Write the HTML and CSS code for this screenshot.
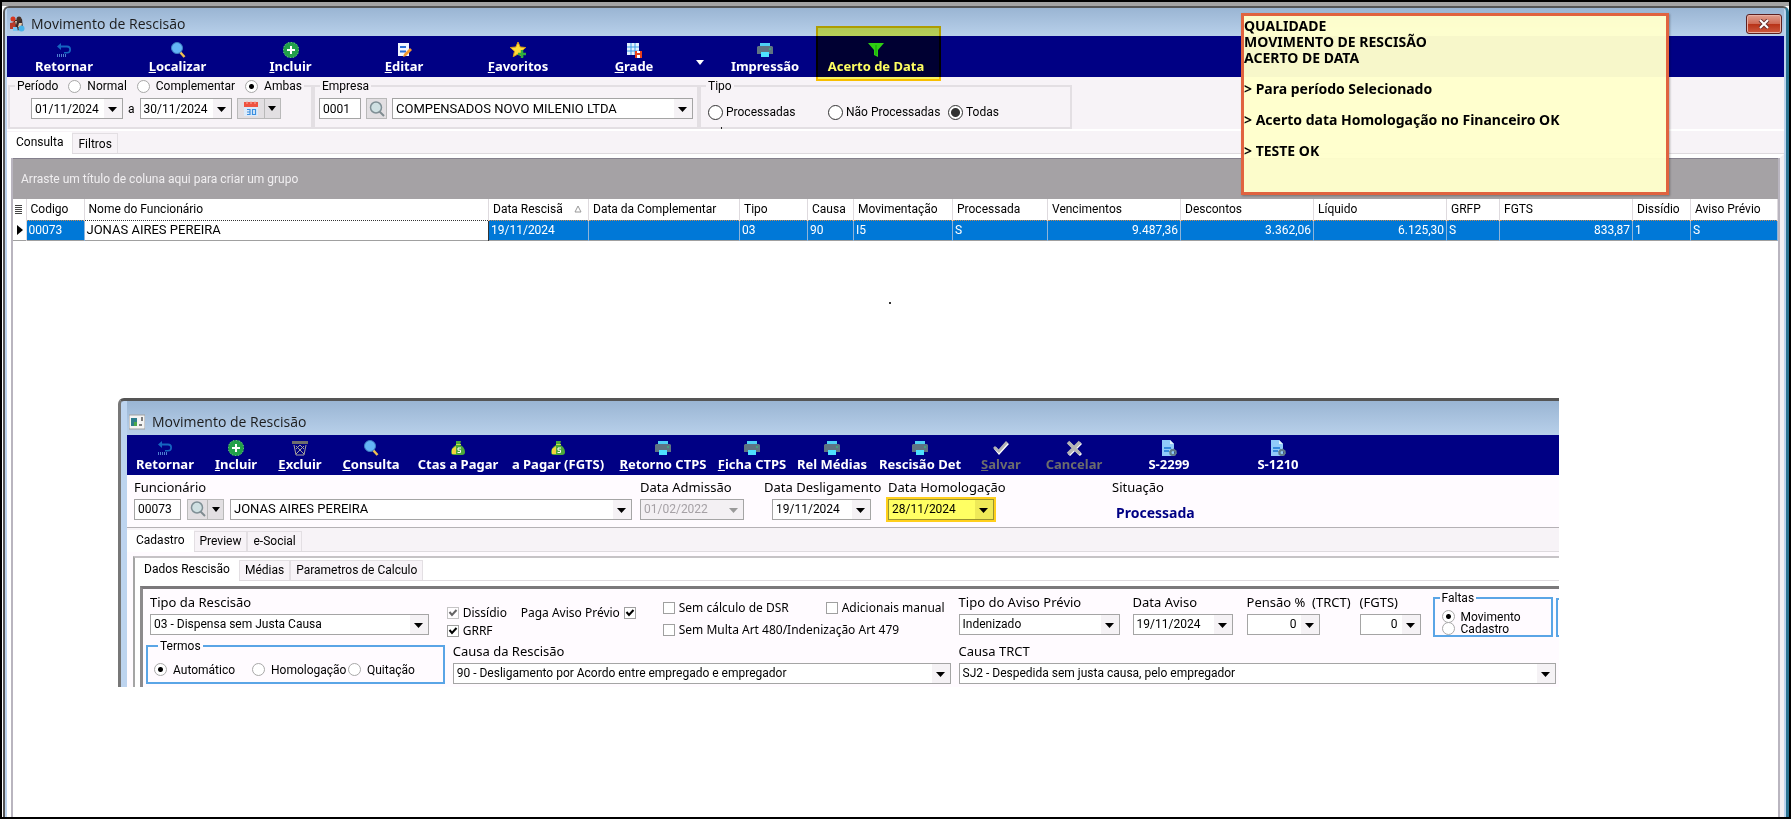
FILE: index.html
```html
<!DOCTYPE html>
<html lang="pt-br">
<head>
    <meta charset="UTF-8">
    <meta name="viewport" content="width=device-width, initial-scale=1.0">
    <title>Movimento de Rescisão</title>
    <link rel="stylesheet" href="styles.css">
</head>
<body>
    <!-- Icones -->
    <svg class="sprite" aria-hidden="true">
        <symbol id="i-retornar" viewBox="0 0 16 16">
            <path d="M1 4.500L5 1v2.500h6a4 4 0 0 1 0 8H8V10h3a2.300 2.300 0 0 0 0-4.600H5V8z" fill="#1565c0"/>
            <path d="M1 13.500h9" stroke="#4f7fd0" stroke-width="3" stroke-dasharray="1 1"/>
        </symbol>
        <symbol id="i-lupa" viewBox="0 0 16 16">
            <path d="M10 10l4.500 5" stroke="#f0c050" stroke-width="2.500"/>
            <circle cx="7" cy="6" r="5.500" fill="#64b5f6" stroke="#3e7fc4"/>
        </symbol>
        <symbol id="i-lupa-cinza" viewBox="0 0 16 16">
            <path d="M10 10l5 5" stroke="#808c90" stroke-width="2"/>
            <circle cx="7" cy="6.500" r="5.500" fill="#cfe0e2" stroke="#7f8f95" stroke-width="1.500"/>
        </symbol>
        <symbol id="i-incluir" viewBox="0 0 16 16">
            <circle cx="8" cy="8" r="8" fill="#22a04a"/>
            <circle cx="8" cy="8" r="7.700" fill="none" stroke="#bfe8c8" stroke-width=".600" stroke-dasharray="1 2"/>
            <path d="M8 4v8M4 8h8" stroke="#fff" stroke-width="2"/>
        </symbol>
        <symbol id="i-editar" viewBox="0 0 16 16">
            <path d="M2 1h11v13H2z" fill="#f2f6ff"/>
            <path d="M4 5h6M4 9.500h6" stroke="#2b6fd6" stroke-width="2"/>
            <path d="M14 6l2 2-6 6-3 1 1-3z" fill="#f59a2b"/>
        </symbol>
        <symbol id="i-favoritos" viewBox="0 0 16 16">
            <path d="M8 0l2.200 5 5.500.500-4.200 3.700 1.300 5.500L8 12l-4.800 2.700 1.300-5.500L.300 5.500 5.800 5z" fill="#fddc3a" stroke="#d99b16"/>
            <path d="M12 8v8M8 12h8" stroke="#2fae3f" stroke-width="2.500"/>
        </symbol>
        <symbol id="i-grade" viewBox="0 0 16 16">
            <path d="M1 1h12v12H1z" fill="#e3f2fd"/>
            <path d="M1 5h12M1 9h12M5 1v12M9 1v12" stroke="#3d9be9"/>
            <path d="M9 9h7v7H9z" fill="#e8401c"/>
            <path d="M11 9h3v2h-3zM11 13h3v3h-3z" fill="#fff"/>
        </symbol>
        <symbol id="i-impressora" viewBox="0 0 16 16">
            <path d="M3 1h10v4H3z" fill="#4dd0f5"/>
            <path d="M1 4h14l1 1v7H0V5z" fill="#5f7482"/>
            <path d="M4 10h8v5H4z" fill="#4de0ff"/>
            <path d="M12 7h2" stroke="#29d07a"/>
        </symbol>
        <symbol id="i-filtro" viewBox="0 0 16 16">
            <path d="M0 1h16L10 8v7l-4-2V8z" fill="#2fd02f"/>
            <path d="M8 3v10" stroke="#13a313"/>
        </symbol>
        <symbol id="i-lixeira" viewBox="0 0 16 16">
            <path d="M0 1h16v3H0z" fill="#6d6d6d"/>
            <path d="M2 5l2 10h8l2-10M4 6l8 8M12 6l-8 8M8 5l4 4M8 5L4 9" fill="none" stroke="#a8a49c"/>
        </symbol>
        <symbol id="i-pagar" viewBox="0 0 16 16">
            <path d="M6 1h5l-1 4c3 1 5 4 5 7 0 2-1 3-3 3H4c-2 0-3-1-3-3 0-3 3-6 5-7z" fill="#4ca83a"/>
            <path d="M2 9l4-3v8l-4 0z" fill="#f4d23c"/>
            <path d="M6 4.500h5" stroke="#c4e04a"/>
            <path d="M11 8H8v2.200h2.500v2.300H7.500" fill="none" stroke="#fff"/>
        </symbol>
        <symbol id="i-salvar" viewBox="0 0 16 16">
            <path d="M1 9l2-2 3 3 7-8 3 2L6 15z" fill="#fff"/>
            <path d="M0 8l2-2 3.500 3.500L13 1l2 2L6 13z" fill="#b4b4b4"/>
        </symbol>
        <symbol id="i-cancelar" viewBox="0 0 16 16">
            <path d="M3 3l12 12M15 3L3 15" stroke="#fff" stroke-width="3"/>
            <path d="M2 2l12 12M14 2L2 14" stroke="#b4b4b4" stroke-width="3.500"/>
        </symbol>
        <symbol id="i-esocial" viewBox="0 0 16 16">
            <path d="M1 0h8l4 4v12H1z" fill="#90caf9"/>
            <path d="M9 0l4 4H9z" fill="#e1f5fe"/>
            <path d="M3 8h7M3 11h5" stroke="#1976d2" stroke-width="1.500"/>
            <circle cx="12" cy="12.500" r="2.500" fill="none" stroke="#607d8b" stroke-width="2"/>
            <circle cx="12" cy="12.500" r="3.500" fill="none" stroke="#607d8b" stroke-dasharray="1.500 1.200"/>
        </symbol>
        <symbol id="i-calendario" viewBox="0 0 16 16">
            <path d="M1 1h14v14H1z" fill="#dcebfa"/>
            <path d="M1 1h14v5H1z" fill="#ef5340"/>
            <path d="M4 0v3M8 0v3M12 0v3" stroke="#f7b0a5"/>
            <path d="M4 8.500h3v5H4M4 11h3M9.500 8.500h3v5h-3z" fill="none" stroke="#3b8fe0" stroke-width="1.200"/>
        </symbol>
        <symbol id="i-app" viewBox="0 0 16 16">
            <path d="M5 4l8-1 1 9-6 3-5-3z" fill="#3a2a2a"/>
            <circle cx="4" cy="3" r="2.500" fill="#d8361e"/>
            <circle cx="10" cy="3" r="2.500" fill="#4a3328"/>
            <path d="M1 7l5-1 1 7-6 0z" fill="#b83a28"/>
            <path d="M6 5l2 0-1 4zM10 7l3 0-1 5-3-1z" fill="#e8c8a8"/>
            <circle cx="12.500" cy="12.500" r="3" fill="#49b4ea"/>
            <path d="M4 11l4 0 1 4-5 0z" fill="#7ac4f0"/>
        </symbol>
        <symbol id="i-janela" viewBox="0 0 16 16">
            <path d="M0 1h16v14H0z" fill="#f4f4f4" stroke="#a0a0a0"/>
            <path d="M2 4h6v8H2z" fill="#2e7d8c"/>
            <path d="M5 8h3v4H5z" fill="#4aa84a"/>
            <path d="M10 11h3M13 3v4" stroke="#555" stroke-width="1.500"/>
        </symbol>
    </svg>

    <div class="desktop">
        <main class="janela">
            <header class="titulo">
                <svg class="icone"><use href="#i-app"/></svg>
                <h1>Movimento de Rescisão</h1>
                <button class="fechar" aria-label="Fechar">
                    <svg viewBox="0 0 12 10"><path d="M2 1l8 8M10 1L2 9" stroke="#6a3030" stroke-width="4"/><path d="M2 1l8 8M10 1L2 9" stroke="#fff" stroke-width="2"/></svg>
                </button>
            </header>

            <nav class="barra barra-principal">
                <button><svg><use href="#i-retornar"/></svg><span>Retornar</span></button>
                <button><svg><use href="#i-lupa"/></svg><span><u>L</u>ocalizar</span></button>
                <button><svg><use href="#i-incluir"/></svg><span><u>I</u>ncluir</span></button>
                <button><svg><use href="#i-editar"/></svg><span><u>E</u>ditar</span></button>
                <button><svg><use href="#i-favoritos"/></svg><span><u>F</u>avoritos</span></button>
                <button><svg><use href="#i-grade"/></svg><span><u>G</u>rade</span></button>
                <button class="mais" aria-label="Mais opções"></button>
                <button><svg><use href="#i-impressora"/></svg><span>Impressão</span></button>
                <button class="acerto"><svg><use href="#i-filtro"/></svg><span>Acerto de Data</span></button>
            </nav>

            <form class="filtros">
                <fieldset class="grupo periodo">
                    <legend>
                        <span>Período</span>
                        <label><input type="radio" name="periodo">Normal</label>
                        <label><input type="radio" name="periodo">Complementar</label>
                        <label><input type="radio" name="periodo" checked>Ambas</label>
                    </legend>
                    <div class="linha">
                        <select class="data" aria-label="Data inicial"><option>01/11/2024</option></select>
                        <span>a</span>
                        <select class="data" aria-label="Data final"><option>30/11/2024</option></select>
                        <span class="botoes">
                            <button type="button" class="botao calendario" aria-label="Calendário"><svg><use href="#i-calendario"/></svg></button>
                            <button type="button" class="botao seta" aria-label="Abrir calendário"></button>
                        </span>
                    </div>
                </fieldset>
                <fieldset class="grupo empresa">
                    <legend>Empresa</legend>
                    <div class="linha">
                        <input type="text" class="codigo" value="0001" aria-label="Código da empresa">
                        <button type="button" class="botao busca" aria-label="Buscar empresa"><svg><use href="#i-lupa-cinza"/></svg></button>
                        <select class="cheio" aria-label="Empresa"><option>COMPENSADOS NOVO MILENIO LTDA</option></select>
                    </div>
                </fieldset>
                <fieldset class="grupo tipo">
                    <legend>Tipo</legend>
                    <div class="opcoes">
                        <label><input type="radio" name="tipo">Processadas</label>
                        <label><input type="radio" name="tipo">Não Processadas</label>
                        <label><input type="radio" name="tipo" checked>Todas</label>
                    </div>
                </fieldset>
            </form>

            <div class="abas">
                <button class="aba ativa">Consulta</button>
                <button class="aba">Filtros</button>
            </div>

            <section class="consulta">
                <p class="agrupar">Arraste um título de coluna aqui para criar um grupo</p>
                <table class="tabela">
                    <colgroup>
                        <col class="c-marca"><col class="c-codigo"><col><col class="c-rescisao"><col class="c-compl">
                        <col class="c-tipo"><col class="c-causa"><col class="c-mov"><col class="c-proc"><col class="c-valor">
                        <col class="c-valor"><col class="c-valor"><col class="c-grfp"><col class="c-valor"><col class="c-dissidio"><col class="c-aviso">
                    </colgroup>
                    <thead>
                        <tr>
                            <th class="marca"><span class="listras"></span></th>
                            <th>Codigo</th>
                            <th>Nome do Funcionário</th>
                            <th class="ordenada"><span>Data Rescisã</span> <svg viewBox="0 0 8 8"><path d="M4 1l3 6H1z" fill="#fff" stroke="#999"/></svg></th>
                            <th>Data da Complementar</th>
                            <th>Tipo</th>
                            <th>Causa</th>
                            <th>Movimentação</th>
                            <th>Processada</th>
                            <th>Vencimentos</th>
                            <th>Descontos</th>
                            <th>Líquido</th>
                            <th>GRFP</th>
                            <th>FGTS</th>
                            <th>Dissídio</th>
                            <th>Aviso Prévio</th>
                        </tr>
                    </thead>
                    <tbody>
                        <tr>
                            <td class="marca"><span class="ponteiro"></span></td>
                            <td>00073</td>
                            <td class="foco">JONAS AIRES PEREIRA</td>
                            <td>19/11/2024</td>
                            <td></td>
                            <td>03</td>
                            <td>90</td>
                            <td>I5</td>
                            <td>S</td>
                            <td class="num">9.487,36</td>
                            <td class="num">3.362,06</td>
                            <td class="num">6.125,30</td>
                            <td>S</td>
                            <td class="num">833,87</td>
                            <td>1</td>
                            <td>S</td>
                        </tr>
                    </tbody>
                </table>

                <div class="ponto"></div>

                <!-- Janela de cadastro -->
                <section class="cadastro">
                    <header class="titulo">
                        <svg class="icone"><use href="#i-janela"/></svg>
                        <h2>Movimento de Rescisão</h2>
                    </header>
                    <div class="corpo">
                        <nav class="barra barra-cadastro">
                            <button><svg><use href="#i-retornar"/></svg><span>Retornar</span></button>
                            <button><svg><use href="#i-incluir"/></svg><span><u>I</u>ncluir</span></button>
                            <button><svg><use href="#i-lixeira"/></svg><span><u>E</u>xcluir</span></button>
                            <button><svg><use href="#i-lupa"/></svg><span><u>C</u>onsulta</span></button>
                            <button><svg><use href="#i-pagar"/></svg><span>Ctas a Pagar</span></button>
                            <button><svg><use href="#i-pagar"/></svg><span>a Pagar (FGTS)</span></button>
                            <button><svg><use href="#i-impressora"/></svg><span><u>R</u>etorno CTPS</span></button>
                            <button><svg><use href="#i-impressora"/></svg><span><u>F</u>icha CTPS</span></button>
                            <button><svg><use href="#i-impressora"/></svg><span>Rel Médias</span></button>
                            <button><svg><use href="#i-impressora"/></svg><span>Rescisão Det</span></button>
                            <button disabled><svg><use href="#i-salvar"/></svg><span><u>S</u>alvar</span></button>
                            <button disabled><svg><use href="#i-cancelar"/></svg><span>Cancelar</span></button>
                            <button><svg><use href="#i-esocial"/></svg><span>S-2299</span></button>
                            <button><svg><use href="#i-esocial"/></svg><span>S-1210</span></button>
                        </nav>

                        <form class="funcionario">
                            <div class="campo campo-func">
                                <label for="func">Funcionário</label>
                                <div class="linha">
                                    <input type="text" id="func" class="codigo" value="00073">
                                    <span class="botoes">
                                        <button type="button" class="botao busca" aria-label="Buscar funcionário"><svg><use href="#i-lupa-cinza"/></svg></button>
                                        <button type="button" class="botao seta" aria-label="Mais buscas"></button>
                                    </span>
                                    <select class="cheio" aria-label="Nome do funcionário"><option>JONAS AIRES PEREIRA</option></select>
                                </div>
                            </div>
                            <div class="campo admissao">
                                <label for="admissao">Data Admissão</label>
                                <select id="admissao" disabled><option>01/02/2022</option></select>
                            </div>
                            <div class="campo desligamento">
                                <label for="desligamento">Data Desligamento</label>
                                <select id="desligamento"><option>19/11/2024</option></select>
                            </div>
                            <div class="campo homologacao">
                                <label for="homologacao">Data Homologação</label>
                                <select id="homologacao" class="destaque"><option>28/11/2024</option></select>
                            </div>
                            <div class="campo situacao">
                                <span>Situação</span>
                                <strong>Processada</strong>
                            </div>
                        </form>

                        <div class="abas">
                            <button class="aba ativa">Cadastro</button>
                            <button class="aba">Preview</button>
                            <button class="aba">e-Social</button>
                        </div>

                        <div class="pagina">
                            <div class="abas abas-internas">
                                <button class="aba ativa">Dados Rescisão</button>
                                <button class="aba">Médias</button>
                                <button class="aba">Parametros de Calculo</button>
                            </div>

                            <form class="dados">
                                <div class="coluna">
                                    <div class="campo tipo-rescisao">
                                        <label for="tipo-rescisao">Tipo da Rescisão</label>
                                        <select id="tipo-rescisao"><option>03 - Dispensa sem Justa Causa</option></select>
                                    </div>
                                    <fieldset class="azul termos">
                                        <legend>Termos</legend>
                                        <label><input type="radio" name="termos" checked>Automático</label>
                                        <label><input type="radio" name="termos">Homologação</label>
                                        <label><input type="radio" name="termos">Quitação</label>
                                    </fieldset>
                                </div>

                                <div class="coluna">
                                    <div class="marcas">
                                        <div class="marcas-a">
                                            <label><input type="checkbox" checked disabled>Dissídio</label>
                                            <label><input type="checkbox" checked>GRRF</label>
                                        </div>
                                        <div class="marcas-b">
                                            <label>Paga Aviso Prévio<input type="checkbox" checked></label>
                                        </div>
                                        <div class="marcas-c">
                                            <label><input type="checkbox">Sem cálculo de DSR</label>
                                            <label><input type="checkbox">Adicionais manual</label>
                                            <label class="larga"><input type="checkbox">Sem Multa Art 480/Indenização Art 479</label>
                                        </div>
                                    </div>
                                    <div class="campo">
                                        <label for="causa">Causa da Rescisão</label>
                                        <select id="causa"><option>90 - Desligamento por Acordo entre empregado e empregador</option></select>
                                    </div>
                                </div>

                                <div class="coluna coluna-aviso">
                                    <div class="avisos">
                                        <div class="campo aviso-tipo">
                                            <label for="aviso">Tipo do Aviso Prévio</label>
                                            <select id="aviso"><option>Indenizado</option></select>
                                        </div>
                                        <div class="campo aviso-data">
                                            <label for="data-aviso">Data Aviso</label>
                                            <select id="data-aviso"><option>19/11/2024</option></select>
                                        </div>
                                        <div class="campo pensao">
                                            <label for="trct">Pensão % &nbsp;(TRCT)</label>
                                            <select id="trct"><option>0</option></select>
                                        </div>
                                        <div class="campo fgts">
                                            <label for="fgts">(FGTS)</label>
                                            <select id="fgts"><option>0</option></select>
                                        </div>
                                        <fieldset class="azul faltas">
                                            <legend>Faltas</legend>
                                            <label><input type="radio" name="faltas" checked>Movimento</label>
                                            <label><input type="radio" name="faltas">Cadastro</label>
                                        </fieldset>
                                        <div class="recorte"></div>
                                    </div>
                                    <div class="campo">
                                        <label for="causa-trct">Causa TRCT</label>
                                        <select id="causa-trct"><option>SJ2 - Despedida sem justa causa, pelo empregador</option></select>
                                    </div>
                                </div>
                            </form>
                        </div>
                    </div>
                </section>
            </section>
        </main>

        <aside class="nota">
            <p>QUALIDADE<br>MOVIMENTO DE RESCISÃO<br>ACERTO DE DATA</p>
            <p>&gt; Para período Selecionado</p>
            <p>&gt; Acerto data Homologação no Financeiro OK</p>
            <p>&gt; TESTE OK</p>
        </aside>
    </div>
</body>
</html>
```
FILE: styles.css
```css
* {
    padding: 0;
    margin: 0;
    box-sizing: border-box;
}

:root {
    --tahoma: 'Noto Sans', 'Open Sans', sans-serif;
    --azul: #000084;
    --borda: #a5a5a5;
    --fundo: #f7f3f7;
}

body {
    min-height: 100vh;
    display: flex;
    border: 2px solid #000;
    background: #fff;
    font-family: Roboto, 'Liberation Sans', sans-serif;
    font-size: 12px;
    line-height: 16px;
    color: #000;
}

button, input, select {
    font: inherit;
    color: inherit;
    border: none;
    border-radius: 0;
    background: none;
}

.sprite {
    position: absolute;
    width: 0;
    height: 0;
}

/* Janela principal */

.desktop {
    position: relative;
    flex: 1;
    min-width: 0;
    display: flex;
    padding-left: 1px;
    border-top: 4px solid #a3a3a3;
}

.janela {
    flex: 1;
    min-width: 0;
    display: flex;
    flex-direction: column;
    padding: 0 2px;
    border: 2px solid #555;
    border-right: 3px solid #2a7390;
    border-bottom: none;
    border-radius: 6px 6px 0 0;
    background: #bdd4ee;
}

.titulo {
    display: flex;
    align-items: center;
    gap: 6px;
    height: 28px;
    padding: 3px 2px 0;
    background: linear-gradient(#9ab5d3, #b8d0ea);
    font-family: 'Open Sans', 'Noto Sans', sans-serif;
}

.titulo h1, .titulo h2 {
    flex: 1;
    font-size: 14px;
    font-weight: normal;
    color: #1c1c1c;
}

.titulo .icone {
    width: 16px;
    height: 16px;
}

.fechar {
    width: 36px;
    height: 20px;
    display: flex;
    align-items: center;
    justify-content: center;
    border: 1px solid #5c2020;
    border-radius: 3px;
    background: linear-gradient(#e0a090, #cf6a55 48%, #b83318 52%, #cc5a40);
    box-shadow: inset 0 0 0 1px #e8b0a4;
}

.fechar svg {
    width: 12px;
    height: 10px;
}

/* Barra de ferramentas */

.barra {
    display: grid;
    padding-top: 2px;
    background: var(--azul);
    font-family: var(--tahoma);
    font-size: 13px;
    font-weight: bold;
    color: #fff;
}

.barra button {
    position: relative;
    display: flex;
    flex-direction: column;
    align-items: center;
    justify-content: center;
    white-space: nowrap;
}

.barra svg {
    width: 16px;
    height: 16px;
}

.barra button:disabled {
    color: #6c6c6c;
}

.barra-principal {
    height: 41px;
    grid-template-columns: 114px 113px 113px 114px 114px 118px 14px 116px 106px;
}

.barra .mais {
    padding-top: 10px;
}

.barra .mais::before {
    content: '';
    border: 4px solid transparent;
    border-top: 5px solid #fff;
    border-bottom: none;
}

/* Marca amarela sobre o botao */
.acerto::after {
    content: '';
    position: absolute;
    inset: -12px -12px -4px -7px;
    border: 2px solid #ffc800;
    background: #ffff60;
    mix-blend-mode: multiply;
}

/* Filtros */

.filtros {
    display: flex;
    height: 52px;
    padding: 1px 0 0 1px;
    background: var(--fundo);
}

.grupo {
    position: relative;
    border: 2px solid #e3dfe3;
    min-width: 0;
}

.grupo legend {
    margin-left: 5px;
    padding: 0 2px;
}

.periodo {
    width: 305px;
}

.periodo legend {
    display: flex;
    gap: 10px;
}

.empresa {
    width: 386px;
}

.tipo {
    width: 373px;
}

.tipo::after {
    content: '';
    position: absolute;
    left: 20px;
    bottom: -2px;
    width: 1px;
    height: 2px;
    background: #222;
}

label {
    display: flex;
    align-items: center;
    white-space: nowrap;
}

.grupo label {
    gap: 6px;
}

.linha {
    display: flex;
    align-items: center;
    gap: 6px;
}

.grupo .linha {
    gap: 5px;
    padding: 4px 4px 0;
}

.periodo .linha {
    padding-left: 21px;
}

.opcoes {
    display: grid;
    grid-template-columns: 120px 120px auto;
    padding: 10px 7px 0;
}

.grupo .opcoes label {
    gap: 3px;
}

input[type="text"], select {
    height: 21px;
    border: 1px solid var(--borda);
    padding: 0 3px;
    background-color: #fff;
}

select {
    appearance: none;
    width: 100%;
    padding-right: 18px;
    background-image: url("data:image/svg+xml,%3Csvg xmlns='http://www.w3.org/2000/svg' width='18' height='19'%3E%3Crect width='18' height='19' fill='%23f5f2f5'/%3E%3Cpath d='M4 8h9l-4.500 5z' fill='%23000'/%3E%3C/svg%3E");
    background-repeat: no-repeat;
    background-position: right center;
}

select:disabled {
    opacity: 1;
    color: #a5a1a5;
    background-color: #f3f0f3;
    background-image: url("data:image/svg+xml,%3Csvg xmlns='http://www.w3.org/2000/svg' width='18' height='19'%3E%3Cpath d='M4 8h9l-4.500 5z' fill='%23999'/%3E%3C/svg%3E");
}

.data {
    width: 92px;
}

.codigo {
    width: 42px;
}

.cheio {
    flex: 1;
    min-width: 0;
    font-size: 13px;
}

.botoes {
    display: flex;
}

.botao {
    height: 21px;
    display: flex;
    align-items: center;
    justify-content: center;
    border: 1px solid #b9b9b9;
    background: #e2dfe2;
}

.botao svg {
    width: 16px;
    height: 16px;
}

.calendario {
    width: 28px;
}

.busca {
    width: 21px;
}

.seta {
    width: 16px;
    border-left: none;
}

.seta::before {
    content: '';
    border: 4px solid transparent;
    border-top: 5px solid #000;
    border-bottom: none;
}

input[type="radio"] {
    appearance: none;
    flex: none;
    width: 13px;
    height: 13px;
    border: 1px solid #a8a8a8;
    border-radius: 50%;
    background: #fff;
}

input[type="radio"]:checked {
    background: radial-gradient(circle, #000 2px, #fff 3px);
}

.opcoes input[type="radio"] {
    width: 15px;
    height: 15px;
    border-color: #333;
}

.opcoes input[type="radio"]:checked {
    background: radial-gradient(circle, #333 4px, #fff 5px);
}

input[type="checkbox"] {
    appearance: none;
    flex: none;
    width: 12px;
    height: 12px;
    border: 1px solid #a0a0a0;
    background: #fff;
}

input[type="checkbox"]:checked {
    background: #fff url("data:image/svg+xml,%3Csvg xmlns='http://www.w3.org/2000/svg' viewBox='0 0 10 10'%3E%3Cpath d='M1.500 4l2.500 3 4.500-5' fill='none' stroke='%23000' stroke-width='2'/%3E%3C/svg%3E");
}

input[type="checkbox"]:disabled {
    opacity: .6;
}

/* Abas */

.abas {
    display: flex;
    align-items: flex-end;
    height: 25px;
    border-top: 2px solid #fff;
    border-bottom: 1px solid #dedade;
    background: var(--fundo);
}

.aba {
    height: 20px;
    padding: 0 5px;
    border: 1px solid #e3dfe3;
    border-bottom: none;
    white-space: nowrap;
}

.aba.ativa {
    height: 22px;
    padding: 0 8px 3px;
    margin-bottom: -1px;
    border-color: #fff;
    background: #fff;
}

/* Consulta */

.consulta {
    flex: 1;
    border-style: solid;
    border-color: #fff #f2f0f3 #fff #fff;
    border-width: 4px 4px 0;
    background: #fff;
    box-shadow: inset 2px 0 #b9b5bf, inset -2px 0 #b9b5bf;
    padding: 0 2px;
}

.agrupar {
    height: 41px;
    padding: 12px 8px 0;
    border-top: 1px solid #84808c;
    background: #a5a2a5;
    color: #f0eef0;
}

.tabela {
    width: 100%;
    table-layout: fixed;
    border-collapse: collapse;
    border-bottom: 1px solid #a0a0a0;
}

.c-marca { width: 13px; }
.c-codigo { width: 58px; }
.c-rescisao { width: 100px; }
.c-compl { width: 151px; }
.c-tipo { width: 68px; }
.c-causa { width: 46px; }
.c-mov { width: 99px; }
.c-proc { width: 95px; }
.c-valor { width: 133px; }
.c-grfp { width: 53px; }
.c-dissidio { width: 58px; }
.c-aviso { width: 87px; }

.tabela th {
    height: 21px;
    padding: 0 4px;
    border-right: 1px solid #dedade;
    text-align: left;
    font-weight: normal;
    white-space: nowrap;
}

.tabela td {
    height: 20px;
    padding: 0 2px;
    border: 1px dotted #c98a50;
    border-right: 1px solid #8fb4d8;
    background: #0078d7;
    color: #fff;
    white-space: nowrap;
}

.tabela .marca {
    padding: 0 2px;
    border: none;
    border-right: 1px solid #dedade;
    background: #fff;
}

.tabela .foco {
    border-color: #333;
    background: #fff;
    font-size: 13px;
    color: #000;
}

.tabela .num {
    text-align: right;
}

.ordenada span {
    margin-right: 8px;
}

.ordenada svg {
    width: 8px;
    height: 8px;
}

.listras {
    display: block;
    width: 7px;
    height: 9px;
    background: repeating-linear-gradient(#444 0 1px, #fff 1px 2px);
}

.ponteiro {
    display: block;
    width: 0;
    border: 5px solid transparent;
    border-left: 6px solid #000;
    border-right: none;
    margin-left: 2px;
}

.ponto {
    width: 2px;
    height: 2px;
    margin: 61px 0 0 calc(50% - 7px);
    background: #333;
}

/* Janela de cadastro */

.cadastro {
    margin: 94px 219px 0 105px;
    padding-left: 6px;
    border-top: 3px solid #555;
    border-left: 3px solid #777;
    border-top-left-radius: 6px;
    background: #bdd4ef;
}

.cadastro .titulo {
    height: 34px;
    gap: 7px;
    padding: 8px 2px 0;
}

.corpo {
    overflow: hidden;
    background: #fffbff;
}

.barra-cadastro {
    height: 40px;
    grid-template-columns: 76px 66px 62px 80px 94px 106px 104px 74px 86px 90px 72px 74px 116px 102px;
}

.funcionario {
    display: flex;
    height: 52px;
    padding: 4px 0 0 7px;
}

.campo > label, .campo > span {
    display: block;
    height: 20px;
    font-family: var(--tahoma);
    font-size: 13px;
    white-space: nowrap;
}

.campo-func {
    width: 506px;
    padding-right: 8px;
}

.campo-func .codigo {
    width: 47px;
}

.admissao {
    width: 124px;
    padding-right: 20px;
}

.desligamento {
    width: 124px;
    padding-right: 17px;
}

.desligamento select {
    margin-left: 8px;
    width: 99px;
}

.homologacao {
    width: 224px;
}

.homologacao select {
    width: 106px;
}

.destaque {
    background-color: #ffff63;
    border: 1px solid #9a9430;
    outline: 2px solid #ffcf1c;
    background-image: url("data:image/svg+xml,%3Csvg xmlns='http://www.w3.org/2000/svg' width='18' height='19'%3E%3Crect width='18' height='19' fill='%23eeea58'/%3E%3Cpath d='M4 8h9l-4.500 5z' fill='%23000'/%3E%3C/svg%3E");
}

.situacao strong {
    display: block;
    padding: 6px 4px;
    font-family: var(--tahoma);
    font-size: 14px;
    color: var(--azul);
}

.cadastro .abas {
    border-top: 1px solid #b5b1b5;
}

.pagina {
    margin: 4px 0 0 6px;
    border-top: 2px solid #c6c3c6;
    border-left: 2px solid #a5a5a5;
    background: #fff;
}

.cadastro .abas-internas {
    height: 23px;
    border-top: none;
    background: #fff;
}

.abas-internas .aba:not(.ativa) {
    background: var(--fundo);
}

.dados {
    display: grid;
    grid-template-columns: 3fr 5fr 6fr;
    gap: 8px;
    height: 101px;
    margin: 5px 0 0 5px;
    padding: 5px 3px 0;
    border-top: 3px solid #7b797b;
    border-left: 3px solid #8c8a8c;
    background: #fffbff;
}

.coluna {
    min-width: 0;
    display: flex;
    flex-direction: column;
}

.tipo-rescisao {
    padding: 0 16px 0 4px;
}

.azul {
    border: 2px solid #5aa5e6;
}

.azul legend {
    margin-left: 4px;
    padding: 0 2px;
}

.termos {
    height: 46px;
    margin-top: 3px;
    display: grid;
    grid-template-columns: 98px 96px auto;
    align-items: center;
    padding: 8px 6px 0;
}

.termos label, .faltas label {
    gap: 6px;
}

.marcas {
    display: flex;
    height: 49px;
    margin-left: -6px;
    padding-top: 6px;
    font-family: var(--tahoma);
    font-size: 12px;
}

.marcas label {
    gap: 4px;
}

.marcas-a {
    width: 74px;
    padding-top: 4px;
}

.marcas-a label {
    height: 18px;
}

.marcas-b {
    width: 142px;
    padding-top: 5px;
}

.marcas-c {
    display: grid;
    grid-template-columns: 163px auto;
    align-content: start;
    row-gap: 6px;
}

.marcas-c .larga {
    grid-column: span 2;
}

.avisos {
    display: flex;
    height: 49px;
}

.aviso-tipo {
    width: 174px;
    padding-right: 13px;
}

.aviso-data {
    width: 114px;
    padding-right: 14px;
}

.pensao {
    width: 113px;
}

.pensao select {
    width: 73px;
}

.fgts {
    width: 73px;
    padding-right: 12px;
}

.pensao select, .fgts select {
    text-align: right;
    text-align-last: right;
    padding-right: 22px;
}

.faltas {
    flex: 1;
    height: 47px;
    margin-top: -4px;
    padding: 5px 7px 0;
    overflow: hidden;
}

.faltas legend {
    margin-left: -2px;
}

.faltas label {
    height: 12px;
}

.recorte {
    width: 5px;
    height: 39px;
    margin: 4px -5px 0 3px;
    border: 2px solid #5aa5e6;
    border-right: none;
}

/* Nota sobre a tela */

.nota {
    position: absolute;
    top: 7px;
    right: 120px;
    width: 428px;
    height: 182px;
    padding: 2px 0;
    border: 3px solid #e0633f;
    background: rgba(255, 255, 204, .97);
    box-shadow: 1px 1px 2px rgba(0, 0, 0, .3);
    font-family: var(--tahoma);
    font-size: 14px;
    font-weight: bold;
}

.nota p {
    margin-bottom: 15px;
}
```
